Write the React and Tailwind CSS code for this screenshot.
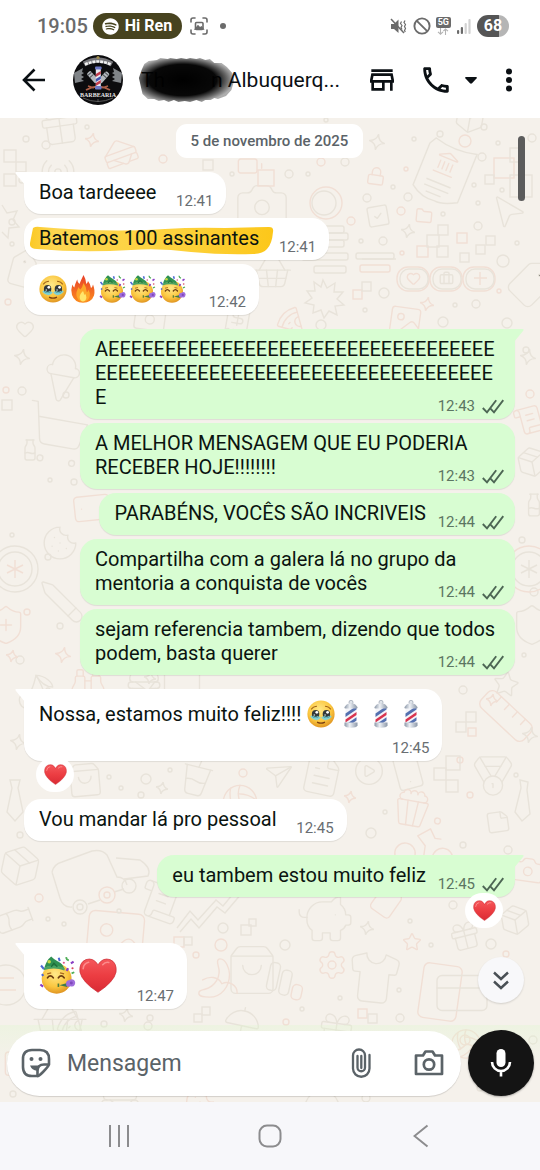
import React from "react";
import { MdOutlineStore, MdOutlineCall } from "react-icons/md";
import { FaSpotify } from "react-icons/fa";
import {
  Sandwich, Gift, Lock, SquareCheck, Folder, Heart, IceCreamCone, ShoppingCart, ShoppingBasket,
  Shield, ShieldPlus, Pencil, Monitor, Binoculars, Hamburger, Ruler, Medal, Smartphone, CirclePlay,
  FileText, Send, CupSoda, Volleyball, ShoppingBag, Bike, Popcorn, Image, Banana, Shirt, Settings,
  CreditCard, Tag, Landmark, Briefcase, Radio, MousePointer2, Umbrella, Pizza, Cookie, Star,
  Receipt, Camera, PiggyBank, Package, Milk, Cherry, ScrollText, StickyNote, Battery,
} from "lucide-react";

/* ---------- wallpaper ---------- */

const G = "#e8e3da";
const P = "#f1dfd5";

const doodles = [
  [Gift, 60, 126, 46, -8, G], [Sandwich, 120, 153, 38, -20, P], [Radio, 58, 172, 38, 0, G],
  [Camera, 262, 205, 58, 0, G], [Lock, 376, 176, 20, 8, P], [SquareCheck, 378, 216, 26, -10, G],
  [Folder, 424, 216, 18, 5, P], [MousePointer2, 508, 212, 40, 8, G], [Tag, 530, 285, 52, 90, G],
  [Image, 405, 322, 38, 8, P], [Tag, 22, 272, 40, 60, G], [ShoppingBasket, 272, 272, 44, 0, G],
  [Pizza, 290, 320, 30, 0, P], [Package, 470, 118, 34, 10, G], [Receipt, 238, 318, 32, 10, G],
  [Camera, 150, 318, 36, 8, G], [Battery, 250, 166, 28, 0, P],
  [Heart, 25, 329, 20, 0, G], [IceCreamCone, 62, 378, 56, 10, G], [ShoppingCart, 56, 434, 70, 10, G],
  [Milk, 30, 450, 24, 0, G], [Smartphone, 92, 508, 42, 84, P], [Cookie, 60, 543, 38, 0, G],
  [ShieldPlus, 6, 625, 44, 0, P], [Pencil, 62, 602, 48, 90, G], [Monitor, 182, 684, 42, 0, G],
  [Binoculars, 88, 684, 38, 0, P], [Hamburger, 144, 682, 38, 0, G], [Cherry, 36, 692, 40, 0, G],
  [Shield, 532, 625, 46, 0, G], [ScrollText, 530, 420, 34, -15, P], [Package, 532, 462, 34, -12, G],
  [Milk, 534, 505, 26, 0, G], [Star, 506, 684, 28, 10, G], [Ruler, 506, 716, 62, -2, P],
  [Medal, 493, 776, 46, 0, G], [Smartphone, 408, 772, 40, -15, G], [CirclePlay, 369, 771, 32, 0, G],
  [FileText, 322, 775, 46, 12, G], [Send, 277, 775, 28, 15, G], [CupSoda, 197, 775, 48, 14, G],
  [Volleyball, 240, 802, 40, 0, P], [ShoppingBag, 85, 780, 38, -5, G], [StickyNote, 498, 822, 26, -8, G],
  [Bike, 426, 840, 70, 8, P], [Popcorn, 412, 808, 42, 10, P], [Package, 20, 866, 46, 12, G],
  [Milk, 14, 920, 42, 70, G], [ScrollText, 160, 902, 46, 20, G], [Image, 115, 940, 74, 5, P],
  [PiggyBank, 325, 920, 62, 0, G], [Tag, 386, 902, 38, 80, P], [Gift, 465, 936, 34, -14, G],
  [Star, 412, 942, 20, 0, P], [Shirt, 374, 978, 58, 6, G], [Settings, 332, 965, 32, 0, P],
  [ShoppingBag, 252, 970, 56, 0, G], [Banana, 218, 978, 46, 0, P], [Smartphone, 440, 992, 66, 8, P],
  [CreditCard, 462, 993, 60, 0, G], [ShoppingBasket, 60, 1022, 62, 0, G], [Umbrella, 242, 1024, 40, 12, G],
  [Package, 515, 920, 34, -10, G], [Camera, 528, 870, 34, 8, P], [Briefcase, 22, 1062, 40, 0, P],
  [Pizza, 70, 1024, 30, 0, G], [Gift, 336, 1030, 40, 8, G], [Volleyball, 466, 1044, 34, 0, P],
  [Hamburger, 120, 1100, 44, 0, G], [Cookie, 200, 1102, 32, 0, P], [Umbrella, 322, 1104, 40, 0, G],
];

const rings = [
  [46, 145, 4], [87, 127, 2], [163, 159, 4], [26, 139, 3], [232, 174, 2], [289, 174, 4], [308, 174, 2],
  [321, 162, 4], [345, 162, 4], [326, 120, 2], [414, 139, 2], [440, 134, 3], [465, 141, 6], [484, 127, 3],
  [498, 143, 2], [532, 138, 4], [482, 157, 4], [406, 169, 2], [393, 187, 2], [474, 185, 2], [367, 198, 4],
  [408, 197, 4], [401, 211, 4], [443, 214, 2], [478, 226, 4], [478, 203, 2], [502, 190, 2], [351, 221, 4],
  [361, 241, 2], [383, 241, 4], [517, 243, 2], [503, 261, 6], [402, 253, 2], [384, 293, 5], [365, 310, 2],
  [455, 305, 2], [476, 304, 4], [499, 291, 2], [443, 322, 5], [507, 323, 5], [321, 325, 5], [12, 222, 3],
  [8, 302, 3], [12, 244, 2], [22, 180, 3], [22, 391, 4], [66, 395, 3], [6, 390, 3], [50, 480, 2],
  [48, 557, 3], [74, 482, 3], [12, 535, 2], [27, 612, 3], [60, 626, 3], [20, 660, 4], [48, 690, 2],
  [526, 350, 3], [530, 394, 4], [522, 540, 3], [534, 592, 4], [524, 655, 2], [463, 690, 4], [460, 760, 3],
  [109, 777, 2], [121, 788, 2], [146, 779, 5], [170, 770, 2], [243, 773, 4], [141, 795, 3], [20, 835, 3],
  [371, 833, 5], [385, 812, 2], [470, 795, 3], [516, 775, 2], [463, 845, 3], [374, 862, 3], [508, 850, 4],
  [39, 898, 4], [48, 919, 2], [64, 924, 2], [119, 911, 2], [223, 928, 5], [221, 945, 6], [285, 945, 5],
  [410, 921, 2], [431, 945, 2], [491, 944, 5], [506, 954, 3], [340, 998, 2], [302, 1009, 2], [399, 990, 2],
  [400, 1018, 4], [286, 1022, 3], [148, 1026, 4], [104, 1024, 3], [13, 1094, 3], [366, 1098, 4],
  [465, 1040, 5], [480, 1088, 3], [533, 1040, 4], [453, 905, 4], [150, 1018, 3], [196, 955, 3],
];

const tiles = [
  [4, 150, 12], [4, 174, 12], [16, 162, 10], [494, 158, 20], [510, 148, 14], [485, 175, 9], [510, 175, 22],
  [417, 246, 11], [427, 235, 12], [438, 225, 10], [437, 246, 11], [457, 233, 10], [476, 245, 9], [486, 236, 9],
  [460, 253, 9], [353, 290, 9], [362, 282, 9], [456, 722, 10], [466, 712, 10], [468, 728, 8], [434, 768, 12],
  [446, 756, 14], [446, 780, 12], [174, 937, 10], [184, 937, 8], [241, 925, 10], [249, 919, 7], [358, 1009, 9],
  [368, 1014, 9], [194, 1014, 8], [202, 1007, 8], [258, 170, 16], [203, 160, 10], [2, 400, 10],
];

const sparkles = [
  [92, 140, 7], [377, 142, 8], [408, 231, 7], [427, 304, 7], [22, 357, 8], [528, 357, 8], [63, 655, 8],
  [150, 678, 6], [162, 788, 6], [350, 797, 6], [367, 928, 7], [126, 1015, 7], [492, 700, 6], [530, 735, 8],
  [18, 742, 8], [12, 656, 6],
];

function Wallpaper() {
  return (
    <svg
      className="absolute inset-0 h-full w-full"
      viewBox="0 118 540 984"
      preserveAspectRatio="xMidYMin slice"
      fill="none"
      stroke={G}
      strokeWidth="1.4"
      aria-hidden="true"
    >
      {doodles.map(([Icon, x, y, s, r, c], i) => (
        <g key={i} transform={`rotate(${r} ${x} ${y})`}>
          <Icon x={x - s / 2} y={y - s / 2} size={s} color={c} strokeWidth={1.4} absoluteStrokeWidth />
        </g>
      ))}
      {rings.map(([x, y, r], i) => (
        <circle key={i} cx={x} cy={y} r={r} stroke={i % 5 === 2 ? P : G} />
      ))}
      {tiles.map(([x, y, s], i) => (
        <rect key={i} x={x} y={y} width={s} height={s} stroke={i % 4 === 3 ? P : G} />
      ))}
      {sparkles.map(([x, y, s], i) => (
        <path
          key={i}
          transform={`translate(${x} ${y}) rotate(12)`}
          d={`M0 ${-s}Q1 -1 ${s} 0Q1 1 0 ${s}Q-1 1 ${-s} 0Q-1 -1 0 ${-s}Z`}
          stroke={i % 3 === 0 ? P : G}
        />
      ))}
      {/* bank receipt */}
      <g transform="rotate(22 443 172)">
        <path d="M420 150l4-7q22 6 44 0v52q-14 8-22 7-14 2-26-7z" />
        <Landmark x={430} y={150} size={26} color={P} strokeWidth={1.4} absoluteStrokeWidth />
        <path d="M430 184h26M430 190h26M434 196h16" />
      </g>
      {/* coins */}
      <circle cx="326" cy="203" r="16" stroke={P} /><circle cx="324" cy="203" r="12" />
      <circle cx="15" cy="569" r="23" /><circle cx="15" cy="569" r="17" />
      <path d="M15 560v18M7 565l16 8M23 565l-16 8" stroke={P} />
      <circle cx="529" cy="569" r="23" stroke={P} /><circle cx="529" cy="569" r="17" />
      <path d="M529 560v18M521 565l16 8M537 565l-16 8" />
      <circle cx="6" cy="985" r="20" /><path d="M-4 978h18M-4 990h20" stroke={P} />
      {/* stacked coins */}
      <g>
        <rect x="306" y="226" width="38" height="7" rx="2" /><rect x="302" y="233" width="46" height="7" rx="2" />
        <rect x="306" y="240" width="38" height="7" rx="2" /><rect x="302" y="253" width="46" height="7" rx="2" />
        <rect x="314" y="266" width="32" height="7" rx="2" /><rect x="356" y="253" width="38" height="6" rx="2" />
        <rect x="360" y="265" width="30" height="7" rx="2" stroke={P} /><path d="M362 259h34" />
      </g>
      {/* burst */}
      <path d="M323 280l4 8 8-5-1 9 9 0-6 7 7 6-9 1 2 9-8-4-5 7-3-8-8 3 1-8-9-2 7-5-5-7 8 0-1-9 7 5z" />
      <path d="M2 205l5 8 10-2-4 9 6 7-10 1-1 10-6-6" />
      {/* badges */}
      {[413, 446, 479].map((x) => (
        <g key={x}>
          <rect x={x - 16} y="267" width="32" height="24" rx="11" stroke={P} />
          <rect x={x - 13} y="269" width="28" height="20" rx="9" />
        </g>
      ))}
      <Heart x={406} y={271} size={15} color={P} strokeWidth={1.4} absoluteStrokeWidth />
      <Briefcase x={439} y={271} size={15} color={G} strokeWidth={1.4} absoluteStrokeWidth />
      <path d="M480 272v13M474 278h13" stroke={P} />
      {/* ties */}
      <path d="M10 780h10l-2 8 5 24-8 9-8-9 5-24z" /><path d="M520 780l8 2-1 8 3 24-8 7-7-9 6-24z" />
      {/* van */}
      <path d="M52 872q2-8 10-10l30-11q10-2 15 4l10 22q8 0 10 8M52 872l8 26q3 10 12 9M88 904l12-4M114 892l10-3" />
      <circle cx="80" cy="907" r="7" /><circle cx="80" cy="907" r="3" />
      <circle cx="107" cy="895" r="8" stroke={P} /><circle cx="107" cy="895" r="3" stroke={P} />
      <circle cx="129" cy="886" r="7" /><path d="M116 858l24 2q12 8 8 16l-24 3" />
      {/* trend line */}
      <path d="M177 928l13-17 8 9 18-20 7 6 20-24h-11M180 932l11-13 8 9 18-21 8 6 17-20" />
      {/* bars */}
      <g transform="rotate(12 285 980)">
        <rect x="268" y="965" width="10" height="28" rx="4" /><rect x="281" y="970" width="10" height="25" rx="4" />
        <rect x="294" y="982" width="10" height="15" rx="4" stroke={P} />
      </g>
    </svg>
  );
}

/* ---------- emoji ---------- */

function EmojiDefs() {
  return (
    <svg className="absolute h-0 w-0" aria-hidden="true">
      <defs>
        <radialGradient id="face" cx="45%" cy="35%" r="65%">
          <stop offset="0" stopColor="#ffe98a" /><stop offset=".65" stopColor="#fbc63f" /><stop offset="1" stopColor="#e09522" />
        </radialGradient>
        <linearGradient id="flame" x1="0" y1="0" x2="0" y2="1">
          <stop offset="0" stopColor="#e8402a" /><stop offset="1" stopColor="#fb8c1e" />
        </linearGradient>
        <linearGradient id="heart" x1="0" y1="0" x2="0" y2="1">
          <stop offset="0" stopColor="#f4585c" /><stop offset=".5" stopColor="#ec3d42" /><stop offset="1" stopColor="#d92a34" />
        </linearGradient>
        <linearGradient id="metal" x1="0" x2="1">
          <stop offset="0" stopColor="#8b97a8" /><stop offset=".4" stopColor="#eef1f5" /><stop offset="1" stopColor="#8b97a8" />
        </linearGradient>
      </defs>
    </svg>
  );
}

function Pleading() {
  return (
    <svg viewBox="0 0 28 28" className="h-7 w-7" role="img" aria-label="rosto emocionado">
      <circle cx="14" cy="14" r="13.6" fill="url(#face)" />
      <path d="M4.5 9Q6 6.500 9.500 6.200M23.500 9Q22 6.500 18.500 6.200" stroke="#9a5b15" strokeWidth="1.100" fill="none" strokeLinecap="round" />
      <path d="M4 16q5 5.500 9 1M24 16q-5 5.500-9 1" stroke="#7fd0d4" strokeWidth="2.200" fill="none" />
      <ellipse cx="8.600" cy="14" rx="3.700" ry="3.900" fill="#33383a" />
      <ellipse cx="19.400" cy="14" rx="3.700" ry="3.900" fill="#33383a" />
      <path d="M5.800 16.400q2.800 2 5.600 0M16.600 16.400q2.800 2 5.600 0" stroke="#64bfc6" strokeWidth="1.400" fill="none" />
      <circle cx="9.800" cy="12.300" r="1.400" fill="#fff" /><circle cx="20.600" cy="12.300" r="1.400" fill="#fff" />
      <circle cx="7.300" cy="15" r=".8" fill="#cfe9ea" /><circle cx="18.100" cy="15" r=".8" fill="#cfe9ea" />
      <path d="M10.500 22.300q3.500 1.800 7 0" stroke="#7a3f12" strokeWidth="1.300" fill="none" strokeLinecap="round" />
    </svg>
  );
}

function Fire() {
  return (
    <svg viewBox="0 0 28 28" className="h-7 w-7" role="img" aria-label="fogo">
      <path d="M14.500 0Q12 5 10.500 9 8.500 8 8.200 4.500 6 9 5.300 12.500 4 11.500 3.300 9.500 1.500 15 3 20q2.500 7.500 11 7.800 8.500-.3 11-7.300 1.400-5-1-11-.5 2.500-2 3.500-.5-4-3-7-.4 2-1.700 3Q17 4 14.500 0z" fill="url(#flame)" />
      <path d="M14.500 8q-1 4-3 6.500-1.500-1-1.800-2.500-3 5-2.200 9 1.500 5.500 6.500 5.800 6-.3 6.800-6 .4-3-1.300-6-.6 2-1.700 2.500-.3-5.500-3.300-9.300z" fill="#fda829" />
      <path d="M14 16q-3.800 3.600-3.300 7 .8 3.300 3.400 3.500 3-.4 3.300-4-.2-2.500-1.400-4-.3 1.200-.9 1.500-.1-2.300-1.100-4z" fill="#ffe66b" />
    </svg>
  );
}

function Party({ large }) {
  return (
    <svg viewBox="0 0 28 28" className={large ? "h-[38px] w-[38px]" : "h-7 w-7"} role="img" aria-label="rosto festejando">
      <circle cx="13" cy="16.800" r="11" fill="url(#face)" />
      <path d="M4 8.500Q5.500 3 9 .3 10.500 2 14 4q3.500 1.600 4.500 5-7-2.500-14.500-.5z" fill="#2f9152" />
      <path d="M3.300 10.500Q3 9 4.200 8.300q6.800-2.300 14.200.2 1 .8.300 2.100-7.700-2.800-15.400-.1z" fill="#4aa363" />
      <circle cx="7.500" cy="4.200" r="1.300" fill="#c6d943" /><path d="M9 8l2-2.600L13.500 8" stroke="#1e6c3a" fill="none" />
      <path d="M6.300 16q2-2.600 4.200 0M14.300 16q2-2.600 4.200 0" stroke="#6b3b10" strokeWidth="1.300" fill="none" strokeLinecap="round" />
      <path d="M6 13.200l3-.7M15.500 12.500l3 .7" stroke="#a9681d" strokeWidth=".9" />
      <path d="M15 21.500l5.800-1.600v3z" fill="#3e7a4e" />
      <path d="M14.300 20.300v2.500" stroke="#4b7a3c" strokeWidth="1.200" />
      <path d="M20 19.300q.6-1.600 2.300-1.400 1.500-1.500 3.500-.3 1.500 1.600.4 3.700-1 1.700-3 1-2.400 1-3.200-.7z" fill="#a06ddb" />
      <circle cx="23.800" cy="19.900" r="1.100" fill="#7f49bd" />
      <path d="M1.500 7l2 2.500M14.500 1.300l.8 2.500M2 14.500l1.300-1" stroke="#4a66d2" strokeWidth="1.500" />
      <path d="M23.500 5.500l2-1.300M1 21l2 1.500M21.500 9l-1.200 2" stroke="#8a3fc4" strokeWidth="1.600" />
      <path d="M20 .8q.2 2 2 2.400M26 12l-2 .8" stroke="#4fae57" strokeWidth="1.300" fill="none" />
      <circle cx="24.700" cy="9" r=".8" fill="#d8465d" /><circle cx="18.300" cy="5" r=".8" fill="#e0568e" />
    </svg>
  );
}

function BarberPole() {
  return (
    <svg viewBox="0 0 28 28" className="h-7 w-7" role="img" aria-label="poste de barbearia">
      <circle cx="14" cy="2.300" r="2" fill="#dfe4ea" stroke="#a2abb8" strokeWidth=".8" />
      <path d="M8 7q1-3.500 6-3.700 5 .2 6 3.700z" fill="url(#metal)" />
      <rect x="8.500" y="8" width="11" height="15" fill="#f3f4f8" />
      <path d="M8.500 13.500l8-5.500h3v1.500l-11 7.500z" fill="#5470b0" />
      <path d="M8.500 19.500l11-7.500v3l-11 7.500z" fill="#d8344f" />
      <path d="M11 23l8.500-5.800v3.300L16 23z" fill="#5470b0" />
      <rect x="7.500" y="6.500" width="13" height="2" rx=".8" fill="url(#metal)" />
      <path d="M7.500 22.500h13v3q-1 2.200-6.500 2.300-5.500-.1-6.500-2.300z" fill="url(#metal)" />
    </svg>
  );
}

function HeartEmoji({ large }) {
  return (
    <svg viewBox="0 0 28 26" className={large ? "h-[35px] w-[38px]" : "h-[21px] w-[23px]"} role="img" aria-label="coração">
      <path d="M14 25.500Q2 17.500.6 10.500-.3 3.500 5 1.200 10.500-.6 14 5 17.500-.6 23 1.200q5.300 2.300 4.400 9.300Q26 17.500 14 25.500z" fill="url(#heart)" stroke="#c92a33" strokeWidth=".5" />
      <path d="M3 8q.3-4 4-4.800M17.500 5q2-2.300 4.500-1.700" stroke="#ff9a98" strokeWidth="1.200" fill="none" strokeLinecap="round" opacity=".8" />
    </svg>
  );
}

const Cell = ({ children }) => <span className="flex h-[33px] w-[30px] items-center">{children}</span>;

/* ---------- messages ---------- */

function Checks() {
  return (
    <svg viewBox="0 0 22 15" className="ml-[7px] h-[15px] w-[22px]" fill="none" stroke="#4d6654" strokeWidth="1.900" role="img" aria-label="entregue">
      <path d="M.8 9l4.200 4.400L14.200 1.200M8.500 9.700l3.500 3.700L21.300 1.200" />
    </svg>
  );
}

function Bubble({ sent, tail, time, gap = "mt-1", pad, reaction, children }) {
  const side = sent ? "self-end bg-[#d8fdd2] pr-[11px]" : "bg-white pr-[13px]";
  const corner = tail ? (sent ? "rounded-tr-none" : "rounded-tl-none") : "";
  const room = pad ?? (sent ? "pr-[78px] pb-1.5" : "pr-[57px] pb-1.5");
  return (
    <li className={`relative grid w-fit max-w-[435px] rounded-[17px] pt-2 pb-1 pl-[15px] shadow-[0_1px_1px_rgba(0,0,0,0.09)] ${side} ${corner} ${gap}`}>
      {tail && (
        <svg
          viewBox="0 0 10 13"
          className={`absolute top-0 h-[13px] w-[10px] ${sent ? "-right-[9px] fill-[#d8fdd2]" : "-left-[9px] fill-white"}`}
          aria-hidden="true"
        >
          {sent ? <path d="M0 0H8.500Q10.500 0 9 2L0 13z" /> : <path d="M10 0H1.500Q-.5 0 1 2L10 13z" />}
        </svg>
      )}
      <div className={`col-start-1 row-start-1 min-w-0 [overflow-wrap:anywhere] text-[20px] leading-6 text-[#0b1410] ${room}`}>{children}</div>
      <div className={`col-start-1 row-start-1 flex items-center self-end justify-self-end text-[15px] leading-[18px] ${sent ? "text-[#5c7562]" : "text-[#696e72]"}`}>
        <time>{time}</time>
        {sent && <Checks />}
      </div>
      {reaction && (
        <span className={`absolute -bottom-[31px] z-10 flex h-[35px] w-[38px] items-center justify-center rounded-full bg-white ${sent ? "right-3" : "left-3"}`}>
          <HeartEmoji />
        </span>
      )}
    </li>
  );
}

/* ---------- bars ---------- */

function StatusBar() {
  return (
    <div className="flex h-[52px] items-center pr-[31px] pl-[37px] text-[#6b6b6b]">
      <span className="text-[20px] font-medium">19:05</span>
      <span className="ml-[5px] flex h-[26px] items-center gap-1.5 rounded-full bg-[#47431f] pr-[10px] pl-[9px] text-white">
        <FaSpotify className="h-[17px] w-[17px]" />
        <span className="text-[16px] font-bold">Hi Ren</span>
      </span>
      <svg viewBox="0 0 18 18" className="ml-2 h-[18px] w-[18px]" fill="none" stroke="currentColor" strokeWidth="1.600" strokeLinecap="round" aria-hidden="true">
        <path d="M1 5V3q0-2 2-2h2M13 1h2q2 0 2 2v2M17 13v2q0 2-2 2h-2M5 17H3q-2 0-2-2v-2" />
        <rect x="5.500" y="5.500" width="7.500" height="7" rx="1" /><path d="M5.500 12l2.500-3 2 2 1.500-1 1.500 2z" fill="currentColor" />
      </svg>
      <span className="ml-[12px] h-1.5 w-1.5 rounded-full bg-[#6b6b6b]" />
      <div className="ml-auto flex items-center">
        <svg viewBox="0 0 17 17" className="h-[17px] w-[17px]" fill="currentColor" aria-hidden="true">
          <path d="M1 6h3l4.500-4.500V15L4 11H1z" /><path d="M1 1l13 14" stroke="currentColor" strokeWidth="1.500" />
          <path d="M11.500 3.500l-1 2 1.500 2-1 2 1 2M15 2.500l-1 2 1.500 2-1 2 1 2-1 2 .8 1.500" fill="none" stroke="currentColor" strokeWidth="1.200" />
        </svg>
        <svg viewBox="0 0 18 18" className="ml-[6px] h-[18px] w-[18px]" fill="none" stroke="currentColor" strokeWidth="1.900" aria-hidden="true">
          <circle cx="9" cy="9" r="7.600" /><path d="M3.800 3.800l10.400 10.400" />
        </svg>
        <span className="ml-[5px] flex flex-col items-center">
          <span className="rounded-[2px] bg-[#6b6b6b] px-0.5 text-[9px] leading-[11px] font-bold text-white">5G</span>
          <svg viewBox="0 0 12 7" className="h-[7px] w-3" fill="none" stroke="#b3b3b3" strokeWidth="1.100" aria-hidden="true">
            <path d="M3.500 0v6M1 3.800l2.500 2.400L6 3.800M8.500 7V1M6.300 3.200L8.500 1 11 3.200" />
          </svg>
        </span>
        <svg viewBox="0 0 14 15" className="ml-[6px] h-[15px] w-[14px]" aria-hidden="true">
          <rect x="0" y="11" width="2.200" height="4" rx="1" fill="#6b6b6b" /><rect x="3.800" y="8" width="2.200" height="7" rx="1" fill="#6b6b6b" />
          <rect x="7.600" y="4" width="2.200" height="11" rx="1" fill="#d2d2d2" /><rect x="11.400" y="0" width="2.200" height="15" rx="1" fill="#d2d2d2" />
        </svg>
        <span className="ml-[6px] flex h-[22px] w-8 items-center justify-center rounded-full bg-linear-to-r from-[#555555] from-68% to-[#b5b5b5] to-68% text-[16px] leading-none font-bold text-white">
          68
        </span>
      </div>
    </div>
  );
}

function Avatar() {
  return (
    <svg viewBox="0 0 50 50" className="h-[50px] w-[50px]" role="img" aria-label="Foto do perfil">
      <circle cx="25" cy="25" r="25" fill="#0c0c0e" />
      <path d="M11 9Q25 1 39 9" stroke="#77777b" strokeWidth="5" fill="none" />
      <path d="M12 9.500q13-6 26 0" stroke="#f1f1f1" strokeWidth="2.600" strokeDasharray="3 .9" fill="none" />
      <circle cx="25" cy="2.500" r="1.600" fill="#a08d4e" />
      <path d="M1 18l9-5-1 4 2 1-3 2 3 2-3 2 3 2-9 2zM49 18l-9-5 1 4-2 1 3 2-3 2 3 2-3 2 9 2z" fill="#808488" />
      <path d="M13 35q12-7 24 0M15 31l6 2M35 31l-6 2" stroke="#ad5f47" strokeWidth="1.800" fill="none" />
      <g transform="rotate(-42 19 22)"><rect x="17" y="16" width="5" height="13" rx="1.500" fill="#b3b8bd" /><path d="M17 18h5M17 21h5" stroke="#4c5056" /></g>
      <g transform="rotate(42 31 22)"><rect x="28.500" y="16" width="5" height="13" rx="1.500" fill="#b3b8bd" /><path d="M28.500 18h5M28.500 21h5" stroke="#4c5056" /></g>
      <rect x="22.800" y="14" width="5" height="18" fill="#e8e9f0" />
      <path d="M22.800 19l5-3v3l-5 3zM22.800 28l5-3v3l-5 3z" fill="#c23b4c" />
      <path d="M22.800 24l5-3v3l-5 3z" fill="#4154ad" />
      <rect x="22" y="11.500" width="6.600" height="3" rx="1" fill="#6d78c4" /><rect x="22" y="31" width="6.600" height="3.500" rx="1" fill="#6d78c4" />
      <text x="25" y="41.500" textAnchor="middle" fontFamily="Liberation Serif, serif" fontWeight="700" fontSize="6" fill="#e5e5e5">BARBEARIA</text>
      <path d="M10 43q15 7 30 0M25 44v3" stroke="#6b6b6b" strokeWidth=".8" fill="none" />
    </svg>
  );
}

function ChatHeader() {
  return (
    <div className="flex h-14 items-center pl-[18px] text-[#0b1014]">
      <button type="button" aria-label="Voltar" className="flex h-8 w-8 items-center justify-center">
        <svg viewBox="0 0 24 24" className="h-6 w-6" fill="none" stroke="currentColor" strokeWidth="2.600" aria-hidden="true">
          <path d="M23 12H2.500M12.500 1.500L2 12l10.500 10.500" />
        </svg>
      </button>
      <div className="ml-[23px]"><Avatar /></div>
      <h1 className="relative ml-[18px] flex flex-1 text-[21px] leading-[30px] whitespace-nowrap">
        <span className="w-[70px]">Th</span>
        <span>n Albuquerq...</span>
        <svg viewBox="-7 0 108 46" preserveAspectRatio="none" className="absolute -top-2 -left-[3px] h-[46px] w-[97px]" role="img" aria-label="Nome ocultado">
          <defs>
            <radialGradient id="ink" cx="46%" cy="50%" r="54%">
              <stop offset="0" stopColor="#000" /><stop offset=".66" stopColor="#000" stopOpacity=".97" />
              <stop offset=".86" stopColor="#000" stopOpacity=".6" /><stop offset="1" stopColor="#000" stopOpacity=".32" />
            </radialGradient>
          </defs>
          <path d="M14 3l4-2 8 1 3-1 7 1 5-1 6 1 4-1 7 1 4-1 6 2 5-1 5 4 8 0 6 4 6 6 2 8-3 9-6 6-9 3-4-1-4 2-6 0-4 2-6-2-7 2-6-1-7 1-5-2-6 2-5-2-6 1-5-2-7 0-6-5-2-8-2-8 3-8 3-6 5-3z" fill="url(#ink)" />
        </svg>
      </h1>
      <div className="flex items-center pr-[27px]">
        <button type="button" aria-label="Catálogo"><MdOutlineStore className="h-8 w-8" /></button>
        <button type="button" aria-label="Ligar" className="ml-[21px]"><MdOutlineCall className="h-[34px] w-[34px]" /></button>
        <button type="button" aria-label="Opções de chamada" className="ml-[12px]">
          <svg viewBox="0 0 12 7" className="h-[7px] w-3" fill="currentColor" aria-hidden="true"><path d="M1 0h10q1.500.3.5 1.500L7 6.300q-1 .9-2 0L.5 1.500Q-.5.300 1 0z" /></svg>
        </button>
        <button type="button" aria-label="Mais opções" className="ml-[28px]">
          <svg viewBox="0 0 8 24" className="h-6 w-2" fill="currentColor" aria-hidden="true"><circle cx="4" cy="3.500" r="3" /><circle cx="4" cy="12" r="3" /><circle cx="4" cy="20.500" r="3" /></svg>
        </button>
      </div>
    </div>
  );
}

function Composer() {
  return (
    <form className="relative mt-auto flex items-center gap-[7px] bg-linear-to-b from-[#dcf8cb]/30 to-transparent to-50% pt-[5px] pr-1.5 pb-1.5 pl-[7px]" onSubmit={(e) => e.preventDefault()}>
      <div className="flex h-[65px] flex-1 items-center rounded-full bg-white pr-[17px] pl-[14px] text-[#5b6368] shadow-[0_1px_1px_rgba(0,0,0,0.14)]">
        <button type="button" aria-label="Figurinhas">
          <svg viewBox="0 0 30 30" className="h-[30px] w-[30px]" fill="none" stroke="currentColor" strokeWidth="2.600" strokeLinejoin="round" aria-hidden="true">
            <path d="M16.500 28H11Q2 28 2 19v-8Q2 2 11 2h8q9 0 9 9v5.500Q27 19 22 24t-5.500 4z" />
            <path d="M16.500 28v-5q0-6.500 6.500-6.500h5" />
            <circle cx="10.500" cy="11" r="2" fill="currentColor" stroke="none" /><circle cx="19.500" cy="11" r="2" fill="currentColor" stroke="none" />
            <path d="M9 17.500h10q-3 1.500-3 5.300-5-.3-7-5.300z" fill="currentColor" stroke="none" />
          </svg>
        </button>
        <input type="text" aria-label="Mensagem" placeholder="Mensagem" className="ml-4 h-10 w-0 flex-1 bg-transparent text-[23px] outline-none placeholder:text-[#5b6368]" />
        <button type="button" aria-label="Anexar">
          <svg viewBox="0 0 20 30" className="h-[30px] w-5" fill="none" stroke="currentColor" strokeWidth="2.300" strokeLinecap="round" aria-hidden="true">
            <path d="M18.500 7v13.500a8 8 0 0 1-16.500 0V7.500a6 6 0 0 1 12 0V19.500a3.700 3.700 0 0 1-7.500 0V8" />
            <path d="M10.300 8v12" />
          </svg>
        </button>
        <button type="button" aria-label="Câmera" className="ml-[43px]">
          <svg viewBox="0 0 30 28" className="h-7 w-[30px]" fill="none" stroke="currentColor" strokeWidth="2.700" strokeLinejoin="round" aria-hidden="true">
            <path d="M2 6.500h7l2.500-4h7l2.500 4h7v18.500H2z" /><circle cx="15" cy="15.500" r="5.200" />
          </svg>
        </button>
      </div>
      <button type="button" aria-label="Gravar áudio" className="flex h-[66px] w-[66px] items-center justify-center rounded-full bg-[#141414] text-white shadow-[0_1px_2px_rgba(0,0,0,0.3)]">
        <svg viewBox="0 0 22 28" className="h-7 w-[22px]" aria-hidden="true">
          <rect x="6.500" y="0" width="9" height="18" rx="4.500" fill="currentColor" />
          <path d="M2 13a9 9 0 0 0 18 0M11 22v5.500" fill="none" stroke="currentColor" strokeWidth="2.600" />
        </svg>
      </button>
    </form>
  );
}

function NavBar() {
  return (
    <nav className="grid h-[68px] grid-cols-3 items-center bg-[#f7f7fa] px-[43px] text-[#8c8c8e]">
      <button type="button" aria-label="Recentes" className="flex justify-center">
        <svg viewBox="0 0 22 22" className="h-[22px] w-[22px]" stroke="currentColor" strokeWidth="2" aria-hidden="true"><path d="M2 0v22M11 0v22M20 0v22" /></svg>
      </button>
      <button type="button" aria-label="Início" className="flex justify-center">
        <svg viewBox="0 0 24 24" className="h-6 w-6" fill="none" stroke="currentColor" strokeWidth="2" aria-hidden="true"><rect x="1.500" y="1.500" width="21" height="21" rx="7.500" /></svg>
      </button>
      <button type="button" aria-label="Voltar" className="flex justify-center">
        <svg viewBox="0 0 16 24" className="h-6 w-4" fill="none" stroke="currentColor" strokeWidth="2" aria-hidden="true"><path d="M14.500 1.500L1.500 12l13 10.500" /></svg>
      </button>
    </nav>
  );
}

const AEE = "A" + "E".repeat(70);

export default function App() {
  return (
    <div className="flex min-h-screen flex-col bg-white font-['Roboto',sans-serif]">
      <EmojiDefs />
      <header className="bg-white pb-[10px]">
        <StatusBar />
        <ChatHeader />
      </header>
      <main className="relative flex flex-1 flex-col overflow-hidden bg-[#f5f1eb]">
        <Wallpaper />
        <div className="relative flex flex-1 flex-col pt-1.5 pr-[25px] pb-4 pl-6">
          <p className="flex h-[34px] items-center self-center rounded-[11px] bg-white px-[15px] text-[15px] font-medium text-[#5b6368]">5 de novembro de 2025</p>
          <ul className="flex flex-col">
            <Bubble tail time="12:41" gap="mt-3.5">Boa tardeeee</Bubble>
            <Bubble time="12:41">
              <mark className="relative block bg-transparent text-inherit">
                <svg viewBox="0 0 244 30" preserveAspectRatio="none" className="absolute -top-[1px] -left-[9px] h-[30px] w-[244px]" aria-hidden="true">
                  <defs>
                    <linearGradient id="marker" x1="0" x2="1">
                      <stop offset="0" stopColor="#fbc926" /><stop offset=".1" stopColor="#fdd650" /><stop offset=".6" stopColor="#fdd23d" /><stop offset="1" stopColor="#fcc71a" />
                    </linearGradient>
                  </defs>
                  <path d="M3 3Q6 1 10 2q70 6 125 2 30-2 60-1l44-1q5 0 4 5-1 12-6 17-4 5-14 5-30 1-62-2-30-4-60-2-50 3-94-1-8 0-7-6z" fill="url(#marker)" />
                </svg>
                <span className="relative">Batemos 100 assinantes</span>
              </mark>
            </Bubble>
            <Bubble time="12:42">
              <div className="flex">
                <Cell><Pleading /></Cell><Cell><Fire /></Cell><Cell><Party /></Cell><Cell><Party /></Cell><Cell><Party /></Cell>
              </div>
            </Bubble>

            <Bubble sent tail time="12:43" gap="mt-3.5" pad="pb-1.5">{AEE}</Bubble>
            <Bubble sent time="12:43" pad="pb-1.5">A MELHOR MENSAGEM QUE EU PODERIA RECEBER HOJE!!!!!!!!</Bubble>
            <Bubble sent time="12:44">PARABÉNS, VOCÊS SÃO INCRIVEIS</Bubble>
            <Bubble sent time="12:44" pad="pb-1.5">Compartilha com a galera lá no grupo da mentoria a conquista de vocês</Bubble>
            <Bubble sent time="12:44" pad="pb-1.5">sejam referencia tambem, dizendo que todos podem, basta querer</Bubble>

            <Bubble tail time="12:45" gap="mt-3.5" pad="pb-[27px] pr-0.5" reaction>
              <div className="flex items-center">
                <span className="mr-1.5">Nossa, estamos muito feliz!!!!</span>
                <Cell><Pleading /></Cell><Cell><BarberPole /></Cell><Cell><BarberPole /></Cell><Cell><BarberPole /></Cell>
              </div>
            </Bubble>
            <Bubble time="12:45" gap="mt-[38px]">Vou mandar lá pro pessoal</Bubble>
            <Bubble sent tail time="12:45" gap="mt-3.5" reaction>eu tambem estou muito feliz</Bubble>
            <Bubble tail time="12:47" gap="mt-[46px]">
              <div className="flex h-12 items-center gap-0.5"><Party large /><HeartEmoji large /></div>
            </Bubble>
          </ul>
        </div>
        <span className="absolute top-[18px] right-[15px] h-[65px] w-[7px] rounded-full bg-[#5c5c5c]" />
        <button type="button" aria-label="Ir para o fim" className="absolute right-[16px] bottom-[99px] flex h-[46px] w-[46px] items-center justify-center rounded-full bg-[#f8f8fa] text-[#4a5055] shadow-[0_1px_2px_rgba(0,0,0,0.14)]">
          <svg viewBox="0 0 16 19" className="h-[19px] w-4" fill="none" stroke="currentColor" strokeWidth="2.400" aria-hidden="true">
            <path d="M1 1.500l7 6.500 7-6.500M1 10.500L8 17l7-6.500" />
          </svg>
        </button>
        <Composer />
      </main>
      <NavBar />
    </div>
  );
}
